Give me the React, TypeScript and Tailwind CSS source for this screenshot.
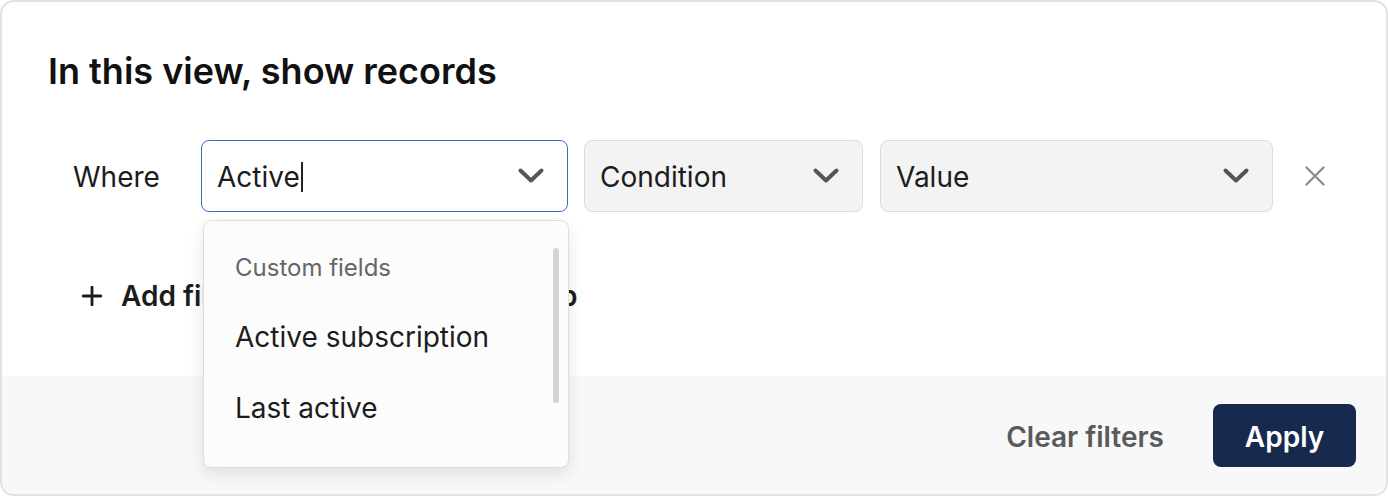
import type { ReactNode } from "react";

function Chevron() {
  return (
    <svg width="28" height="18" viewBox="0 0 28 18" fill="none" className="text-[#555]">
      <path d="M3.5 3.5 L14 13.5 L24.5 3.5" stroke="currentColor" strokeWidth="4" strokeLinecap="round" strokeLinejoin="round" />
    </svg>
  );
}

function PlusIcon() {
  return (
    <svg width="20" height="20" viewBox="0 0 20 20" fill="none" className="text-[#1c1c1c]">
      <path d="M10 1 V19 M1 10 H19" stroke="currentColor" strokeWidth="2.8" strokeLinecap="round" />
    </svg>
  );
}

function Select({ label, width, active }: { label: ReactNode; width: string; active?: boolean }) {
  return (
    <div
      className={`flex h-[72px] ${width} items-center justify-between rounded-[8px] border pl-[15px] pr-[22px] ${
        active ? "border-[#3b6cc9] bg-white" : "border-[#dcdcdc] bg-[#f3f3f3]"
      }`}
    >
      <span className="flex items-center pt-[2px] text-[28px] text-[#1c1c1c]">
        {label}
        {active && <span className="ml-[1px] inline-block h-[30px] w-[2px] bg-[#222]" />}
      </span>
      <Chevron />
    </div>
  );
}

export default function App() {
  return (
    <div className="h-[496px] w-[1388px] bg-white font-['Inter',sans-serif]">
      <div className="flex h-full w-full flex-col overflow-hidden rounded-[14px] border-2 border-[#e2e2e2] bg-white">
        {/* Top */}
        <div className="flex-1 pl-[46px] pt-[47px]">
          <h2 className="text-[36px] font-semibold leading-[44px] text-[#111]">
            In this view, show records
          </h2>

          <div className="mt-[47px] flex items-center pl-[25px]">
            <span className="w-[128px] pt-[2px] text-[28px] text-[#1c1c1c]">Where</span>
            <div className="relative">
              <Select label="Active" width="w-[367px]" active />
              {/* Dropdown */}
              <div className="absolute left-[2px] top-[80px] z-10 h-[248px] w-[366px] rounded-[8px] border border-[#dedede] bg-[#fcfcfc] shadow-[0_6px_16px_rgba(0,0,0,0.10)]">
                <div className="flex h-full">
                  <div className="flex-1 pl-[31px] pt-[31px]">
                    <div className="text-[24px] leading-[32px] text-[#666]">Custom fields</div>
                    <div className="mt-[36px] text-[28px] leading-[34px] text-[#1c1c1c]">Active subscription</div>
                    <div className="mt-[37px] text-[28px] leading-[34px] text-[#1c1c1c]">Last active</div>
                  </div>
                  <div className="mr-[9px] mt-[27px] h-[155px] w-[6px] rounded-full bg-[#d4d4d4]" />
                </div>
              </div>
            </div>
            <div className="ml-[16px]">
              <Select label="Condition" width="w-[279px]" />
            </div>
            <div className="ml-[17px]">
              <Select label="Value" width="w-[393px]" />
            </div>
            <svg width="20" height="20" viewBox="0 0 20 20" fill="none" className="ml-[32px] text-[#8a8a8a]">
              <path d="M1.5 1.5 L18.5 18.5 M18.5 1.5 L1.5 18.5" stroke="currentColor" strokeWidth="2.2" strokeLinecap="round" />
            </svg>
          </div>

          <div className="mt-[63px] flex items-center gap-[80px] pl-[34px]">
            <button className="flex items-center gap-[19px] text-[28px] font-semibold text-[#1c1c1c]">
              <PlusIcon />
              Add filter
            </button>
            <button className="flex items-center gap-[19px] text-[28px] font-semibold text-[#1c1c1c]">
              <PlusIcon />
              Add filter group
            </button>
          </div>
        </div>

        {/* Footer */}
        <div className="flex h-[118px] items-center justify-end gap-[49px] bg-[#f8f8f8] pr-[30px]">
          <button className="pt-[4px] text-[28px] font-semibold text-[#5a5a5a]">Clear filters</button>
          <button className="h-[63px] w-[143px] rounded-[8px] bg-[#172a4d] pt-[3px] text-[28px] font-semibold text-white">
            Apply
          </button>
        </div>
      </div>
    </div>
  );
}
